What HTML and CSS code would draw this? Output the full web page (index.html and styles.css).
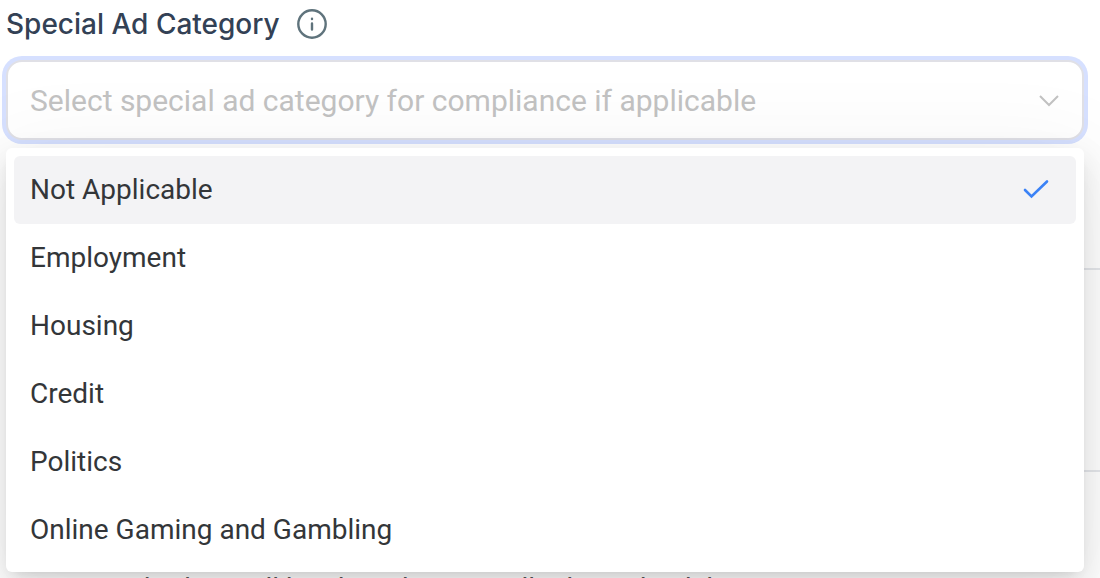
FILE: index.html
```html
<!DOCTYPE html>
<html lang="en">
<head>
  <meta charset="UTF-8">
  <meta name="viewport" content="width=device-width, initial-scale=1.0">
  <title>Special Ad Category</title>
  <link rel="stylesheet" href="styles.css">
</head>
<body>
  <div class="form-group">
    <div class="label-row">
      <label for="category">Special Ad Category</label>
      <svg class="info-icon" viewBox="0 0 32 32" aria-hidden="true">
        <circle cx="16" cy="16" r="13.7"/>
        <path d="M16 15.5v6M16 10.8v.2"/>
      </svg>
    </div>
    <div class="select-box">
      <select id="category">
        <option value="" selected>Select special ad category for compliance if applicable</option>
      </select>
      <svg class="chevron" viewBox="0 0 20 12" aria-hidden="true">
        <path d="M1 1l9 9 9-9"/>
      </svg>
      <div class="menu">
        <button type="button" class="option selected">Not Applicable
          <svg class="check" viewBox="0 0 26 20" aria-hidden="true">
            <path d="M2 11l6.500 6.500L24 2.500"/>
          </svg>
        </button>
        <button type="button" class="option">Employment</button>
        <button type="button" class="option">Housing</button>
        <button type="button" class="option">Credit</button>
        <button type="button" class="option">Politics</button>
        <button type="button" class="option">Online Gaming and Gambling</button>
      </div>
    </div>
  </div>
  <div class="section"></div>
  <p class="hint">Campaign budget will be shared across all ad sets by delivery</p>
</body>
</html>
```
FILE: styles.css
```css
* {
  box-sizing: border-box;
}
body {
  margin: 0;
  background-color: #fff;
  font-family: Roboto, sans-serif;
  font-size: 28px;
  overflow: hidden;
}
.form-group {
  padding: 0 16px 0 6px;
}
.label-row {
  display: flex;
  align-items: center;
  gap: 16px;
  height: 48px;
  margin-bottom: 12px;
  color: #334155;
}
.label-row label {
  font-family: Inter, sans-serif;
  font-weight: 500;
}
.info-icon {
  width: 32px;
  height: 32px;
  fill: none;
  stroke: #5f737c;
  stroke-width: 2.4;
  stroke-linecap: round;
}
.select-box {
  position: relative;
}
.select-box select {
  display: block;
  width: 100%;
  height: 80px;
  padding: 0 60px 0 22px;
  appearance: none;
  border: 2px solid #e0e0e6;
  border-radius: 16px;
  outline: none;
  box-shadow: 0 0 0 4px #d6e0ff;
  background-color: #fff;
  color: #c2c2c2;
  font: inherit;
  font-size: 30px;
}
.chevron {
  position: absolute;
  top: 35px;
  right: 25px;
  width: 20px;
  height: 12px;
  fill: none;
  stroke: #c2c2c2;
  stroke-width: 2;
}
.menu {
  position: absolute;
  top: 88px;
  left: 0;
  right: 0;
  z-index: 1;
  padding: 8px;
  border-radius: 6px;
  background-color: #fff;
  box-shadow: 0 6px 12px -8px rgba(0, 0, 0, 0.16), 0 12px 32px rgba(0, 0, 0, 0.12), 0 18px 96px 16px rgba(0, 0, 0, 0.05);
}
.option {
  display: flex;
  align-items: center;
  justify-content: space-between;
  width: 100%;
  height: 68px;
  padding: 0 27px 2px 16px;
  border: none;
  border-radius: 6px;
  background: none;
  color: #333639;
  font: inherit;
  text-align: left;
  cursor: pointer;
}
.option.selected,
.option:hover {
  background-color: #f3f3f5;
}
.check {
  width: 26px;
  height: 20px;
  fill: none;
  stroke: #3b82f6;
  stroke-width: 2.6;
  stroke-linecap: round;
}
.section {
  height: 204px;
  margin: 128px 0 0 6px;
  border-top: 2px solid #e5e7eb;
  border-bottom: 2px solid #e5e7eb;
}
.hint {
  margin: 100px 8px 0 10px;
  color: #555;
}
```
